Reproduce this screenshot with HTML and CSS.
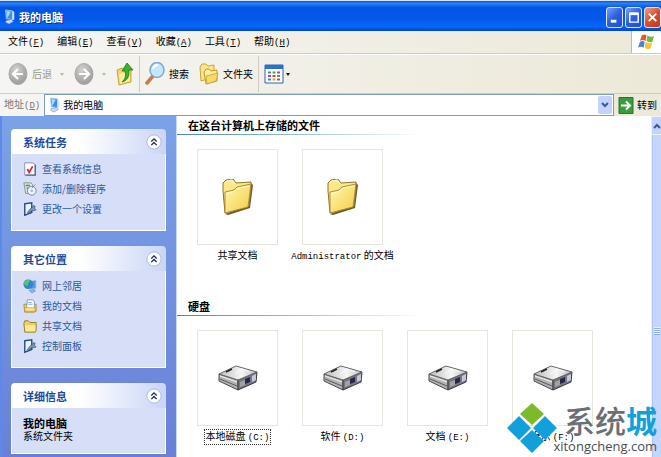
FILE: index.html
```html
<!DOCTYPE html>
<html lang="zh-CN">
  <head>
    <meta charset="utf-8" />
    <meta name="viewport" content="width=device-width, initial-scale=1" />
    <title>我的电脑</title>
    <link rel="stylesheet" href="styles.css">
  </head>
  <body>
    <!-- shared icons -->
    <svg class="sprite" aria-hidden="true">
      <defs>
        <linearGradient id="folder-fill" x1="0" y1="0" x2="1" y2="1">
          <stop offset="0" stop-color="#fff9b0" />
          <stop offset="1" stop-color="#f5cb45" />
        </linearGradient>
        <linearGradient id="disk-top" x1="0" y1="0" x2="1" y2="0">
          <stop offset="0" stop-color="#bdbdbd" />
          <stop offset=".6" stop-color="#f6f6f6" />
          <stop offset="1" stop-color="#b9b9bd" />
        </linearGradient>
        <radialGradient id="nav-fill" cx=".4" cy=".3" r=".7">
          <stop offset="0" stop-color="#d2d2d0" />
          <stop offset="1" stop-color="#9c9c9a" />
        </radialGradient>
      </defs>
      <symbol id="computer" viewBox="0 0 16 16">
        <path d="M4 0l8 1v10l-7-1z" fill="#3f8fe0" stroke="#a9cdf2" />
        <path d="M5 1l5 1-4 7z" fill="#a8d8fb" />
        <path d="M12 1l2 1v9l-2 0z" fill="#d7e3f2" />
        <path d="M5 12l6-1 2 2-5 3-4-2z" fill="#c9dcf2" stroke="#5e86bd" stroke-width=".6" />
      </symbol>
      <symbol id="folder" viewBox="0 0 32 36">
        <path d="M3 35L6 36 28 29 31 6 29 4 26 27z" fill="#6b5a26" />
        <path d="M1 12L1 4 4 1 11 0 14 4 29 3 29 8 27 27 3 34z" fill="#f9e788" stroke="#8c7626" />
        <path d="M3 13L12 11 15 8 29 5 26 28 3 34z" fill="url(#folder-fill)" stroke="#a08430" stroke-width=".9" />
        <path d="M3 4l2-2 5-1 3 4" fill="none" stroke="#fffbd2" />
        <path d="M4 15l9-3 3-3 11-2" fill="none" stroke="#fffcd8" stroke-width=".8" />
      </symbol>
      <symbol id="disk" viewBox="0 0 40 26">
        <path d="M1 9L20 15 20 25 1 16z" fill="#b2b2b2" stroke="#4a4a4a" />
        <path d="M20 15L39 7 38 17 20 25z" fill="#77777f" stroke="#3a3a46" />
        <path d="M1 9L18 1 39 7 20 15z" fill="url(#disk-top)" stroke="#666" />
        <path d="M2 11l17 6" stroke="#f2f2f2" fill="none" />
        <path d="M2 14l17 7" stroke="#5a5a5a" fill="none" />
        <path d="M22 17l5-2v5l-5 2z" fill="#a2a2a6" />
        <path d="M27 14l5-2v5l-5 2z" fill="#26264c" />
        <path d="M34 11l4-2v6l-4 2z" fill="#c5c5e0" />
        <path d="M8 7l6-3" stroke="#222" stroke-width="1.6" />
        <path d="M17 9l7-5 8 3" fill="none" stroke="#fff" stroke-width=".8" />
      </symbol>
      <symbol id="chevrons" viewBox="0 0 18 18">
        <circle cx="9" cy="9" r="8" fill="#fff" stroke="#a8b4d8" />
        <path d="M6 8.500l3-3 3 3M6 12.500l3-3 3 3" fill="none" stroke="#1b2c55" stroke-width="1.500" />
      </symbol>
      <symbol id="settings" viewBox="0 0 16 16">
        <path d="M2 2l8-1v11l-8 3z" fill="#e9f2fc" stroke="#294f7d" stroke-width="1.600" />
        <path d="M5 12l4-5 2-1 1-2 2 1-1 2 2 2-3 1-2 0-4 3z" fill="#7c97ba" stroke="#2a4569" stroke-width=".7" />
      </symbol>
    </svg>

    <div class="window">
      <header class="titlebar">
        <svg class="icon"><use href="#computer" /></svg>
        <h1 class="titlebar__text">我的电脑</h1>
        <div class="titlebar__buttons">
          <button class="winbtn" aria-label="最小化">
            <svg viewBox="0 0 16 18"><path d="M4 13h6" stroke="#fff" stroke-width="3" /></svg>
          </button>
          <button class="winbtn" aria-label="最大化">
            <svg viewBox="0 0 16 18"><path d="M4 5h9v9H4z" fill="none" stroke="#fff" stroke-width="1.500" /><path d="M3.500 5h10" stroke="#fff" stroke-width="3" /></svg>
          </button>
          <button class="winbtn winbtn--close" aria-label="关闭">
            <svg viewBox="0 0 16 18"><path d="M4 5l8 8M12 5l-8 8" stroke="#fff" stroke-width="2" /></svg>
          </button>
        </div>
      </header>

      <nav class="menubar">
        <button class="menubar__item">文件<span class="latin">(<u>F</u>)</span></button>
        <button class="menubar__item">编辑<span class="latin">(<u>E</u>)</span></button>
        <button class="menubar__item">查看<span class="latin">(<u>V</u>)</span></button>
        <button class="menubar__item">收藏<span class="latin">(<u>A</u>)</span></button>
        <button class="menubar__item">工具<span class="latin">(<u>T</u>)</span></button>
        <button class="menubar__item">帮助<span class="latin">(<u>H</u>)</span></button>
        <span class="menubar__logo">
          <svg viewBox="0 0 18 18">
            <path d="M4 2q3-2 5 0L8 8q-3-2-6 0z" fill="#e4572b" />
            <path d="M10 2q3 2 7 1l-2 6q-3 1-6-1z" fill="#74b843" />
            <path d="M2 9q3-2 5 0l-1 6q-3-2-6 0z" fill="#4a82d8" />
            <path d="M8 9q3 2 7 1l-2 6q-3 1-6-1z" fill="#f5c234" />
          </svg>
        </span>
      </nav>

      <div class="toolbar">
        <button class="tool tool--off">
          <svg class="tool__nav" viewBox="0 0 20 22"><ellipse cx="10" cy="11" rx="9" ry="10.500" fill="url(#nav-fill)" stroke="#aaa9a3" /><path d="M15 11H6M10 6l-5 5 5 5" fill="none" stroke="#fff" stroke-width="2.200" /></svg>
          后退
          <span class="caret"></span>
        </button>
        <button class="tool tool--off" aria-label="前进">
          <svg class="tool__nav" viewBox="0 0 20 22"><ellipse cx="10" cy="11" rx="9" ry="10.500" fill="url(#nav-fill)" stroke="#aaa9a3" /><path d="M5 11h9M10 6l5 5-5 5" fill="none" stroke="#fff" stroke-width="2.200" /></svg>
          <span class="caret"></span>
        </button>
        <button class="tool" aria-label="向上">
          <svg class="tool__up" viewBox="0 0 18 24">
            <path d="M1 8l5-2 2 2 7-1v13l-12 3z" fill="#f3d566" stroke="#b5942c" stroke-width=".8" />
            <path d="M3 12l11-3v10L4 22z" fill="#fbeb9c" />
            <path d="M6 20q5-4 3-11H6l5-8 6 7h-4q1 10-7 12z" fill="#3db02f" stroke="#1f7a1c" stroke-width=".8" />
          </svg>
        </button>
        <span class="toolbar__line"></span>
        <button class="tool">
          <svg class="tool__search" viewBox="0 0 20 24">
            <path d="M8 14l-6 7" stroke="#c47a50" stroke-width="3.500" stroke-linecap="round" />
            <ellipse cx="12" cy="8" rx="7" ry="7.500" fill="#c5e6fb" stroke="#7fa6d2" stroke-width="1.500" />
            <path d="M8 7q1-4 5-4" stroke="#fff" stroke-width="2" fill="none" />
          </svg>
          搜索
        </button>
        <button class="tool">
          <svg class="tool__folders" viewBox="0 0 20 22">
            <path d="M1 4l2-3h4l2 2 6-1v12L2 18z" fill="#fae68a" stroke="#c9a53a" />
            <path d="M5 9l2-3h3l2 2 6-1v11L7 21z" fill="#fdeea0" stroke="#c09a30" />
            <path d="M7 13l12-3-2 8-9 3z" fill="#f8d968" stroke="#c09a30" stroke-width=".7" />
          </svg>
          文件夹
        </button>
        <span class="toolbar__line"></span>
        <button class="tool tool--views" aria-label="查看方式">
          <svg class="tool__views" viewBox="0 0 20 20">
            <path d="M1 1h18v18H1z" fill="#fff" stroke="#2a63b8" />
            <path d="M1 1h18v4H1z" fill="#2f6fd0" />
            <path d="M4 8.500h3M4 15.500h3" stroke="#5b7fae" stroke-width="2" />
            <path d="M8.500 8.500h3M13 12h3" stroke="#55976b" stroke-width="2" />
            <path d="M13 8.500h3M4 12h3" stroke="#7a5fae" stroke-width="2" />
            <path d="M8.500 12h3M13 15.500h3" stroke="#c3532e" stroke-width="2" />
            <path d="M8.500 15.500h3" stroke="#d7a42c" stroke-width="2" />
          </svg>
          <span class="caret"></span>
        </button>
      </div>

      <div class="address">
        <label class="address__label" for="address">地址<span class="latin">(<u>D</u>)</span></label>
        <div class="address__field">
          <svg class="icon"><use href="#computer" /></svg>
          <input class="address__input" id="address" type="text" value="我的电脑">
          <button class="address__drop" aria-label="展开">
            <svg viewBox="0 0 8 6"><path d="M1 1l3 3 3-3" fill="none" stroke="#3c5b96" stroke-width="2" /></svg>
          </button>
        </div>
        <button class="address__go">
          <svg viewBox="0 0 16 18"><path d="M1 1h14v16H1z" fill="#3a9c3c" stroke="#23772a" /><path d="M3 9h9M8 5l4 4-4 4" fill="none" stroke="#fff" stroke-width="2" /></svg>
          转到
        </button>
      </div>

      <div class="content">
        <aside class="sidebar">
          <section class="pane">
            <header class="pane__head">
              <h2 class="pane__title">系统任务</h2>
              <button class="pane__toggle" aria-label="折叠"><svg><use href="#chevrons" /></svg></button>
            </header>
            <div class="pane__body">
              <a class="pane__link" href="#">
                <svg class="icon" viewBox="0 0 16 16"><path d="M2 1h9l3 2v12H2z" fill="#fff" stroke="#7d8aa8" /><path d="M14 3v12H3" fill="none" stroke="#56658c" stroke-width="1.500" /><path d="M5 8l2 4 4-7" fill="none" stroke="#d3253c" stroke-width="2" /></svg>
                查看系统信息
              </a>
              <a class="pane__link" href="#">
                <svg class="icon" viewBox="0 0 16 16"><path d="M1 1h8l2 2v10H3z" fill="#dfe7e0" stroke="#7c8f88" /><path d="M3 4h5M4 7h3" stroke="#4f9457" stroke-width="1.500" /><circle cx="10" cy="10" r="5" fill="#eef1fb" stroke="#6f7fa8" /><circle cx="10" cy="10" r="1.500" fill="#a9b4d8" /><path d="M10 7l4-4" stroke="#a86892" /></svg>
                添加/删除程序
              </a>
              <a class="pane__link" href="#"><svg class="icon"><use href="#settings" /></svg>更改一个设置</a>
            </div>
          </section>

          <section class="pane">
            <header class="pane__head">
              <h2 class="pane__title">其它位置</h2>
              <button class="pane__toggle" aria-label="折叠"><svg><use href="#chevrons" /></svg></button>
            </header>
            <div class="pane__body">
              <a class="pane__link" href="#">
                <svg class="icon" viewBox="0 0 16 16"><path d="M8 2l7-1v10l-7 1z" fill="#4c9be6" stroke="#c3d6ee" /><circle cx="6" cy="6" r="5.500" fill="#2f86c8" /><path d="M1 4q4-5 7-2l-2 3-1 3q-4-1-4-4z" fill="#63c069" /><path d="M7 13l6-1 1 2-4 2z" fill="#9db5d8" stroke="#5b779f" stroke-width=".6" /></svg>
                网上邻居
              </a>
              <a class="pane__link" href="#">
                <svg class="icon" viewBox="0 0 16 16"><path d="M1 6h14v8l-2 1H2z" fill="#f2d46c" stroke="#a98a2c" /><path d="M5 1h6l2 2v8H4z" fill="#fff" stroke="#7f93b4" /><path d="M6 4h4M6 6h5" stroke="#7fa3d0" /><path d="M2 10h12v4H2z" fill="#fae48a" stroke="#a98a2c" stroke-width=".6" /></svg>
                我的文档
              </a>
              <a class="pane__link" href="#">
                <svg class="icon" viewBox="0 0 16 16"><path d="M1 5l1-3h4l2 2h7v9l-1 2H2z" fill="#f0cf5c" stroke="#8e752c" /><path d="M2 7h12v7H3z" fill="#fdeb94" /></svg>
                共享文档
              </a>
              <a class="pane__link" href="#"><svg class="icon"><use href="#settings" /></svg>控制面板</a>
            </div>
          </section>

          <section class="pane">
            <header class="pane__head">
              <h2 class="pane__title">详细信息</h2>
              <button class="pane__toggle" aria-label="折叠"><svg><use href="#chevrons" /></svg></button>
            </header>
            <div class="pane__body pane__body--details">
              <strong>我的电脑</strong>
              <p>系统文件夹</p>
            </div>
          </section>
        </aside>

        <main class="files">
          <section class="group">
            <h2 class="group__title">在这台计算机上存储的文件</h2>
            <div class="group__grid">
              <a class="tile" href="#">
                <span class="tile__box"><svg class="tile__folder"><use href="#folder" /></svg></span>
                <span class="tile__name">共享文档</span>
              </a>
              <a class="tile" href="#">
                <span class="tile__box"><svg class="tile__folder"><use href="#folder" /></svg></span>
                <span class="tile__name"><span class="latin">Administrator</span> 的文档</span>
              </a>
            </div>
          </section>

          <section class="group">
            <h2 class="group__title">硬盘</h2>
            <div class="group__grid">
              <a class="tile" href="#">
                <span class="tile__box"><svg class="tile__disk"><use href="#disk" /></svg></span>
                <span class="tile__name tile__name--focus">本地磁盘 <span class="latin">(C:)</span></span>
              </a>
              <a class="tile" href="#">
                <span class="tile__box"><svg class="tile__disk"><use href="#disk" /></svg></span>
                <span class="tile__name">软件 <span class="latin">(D:)</span></span>
              </a>
              <a class="tile" href="#">
                <span class="tile__box"><svg class="tile__disk"><use href="#disk" /></svg></span>
                <span class="tile__name">文档 <span class="latin">(E:)</span></span>
              </a>
              <a class="tile" href="#">
                <span class="tile__box"><svg class="tile__disk"><use href="#disk" /></svg></span>
                <span class="tile__name">娱乐 <span class="latin">(F:)</span></span>
              </a>
            </div>
          </section>
        </main>

        <div class="scrollbar">
          <button class="scrollbar__up" aria-label="向上滚动">
            <svg viewBox="0 0 8 6"><path d="M1 5l3-3 3 3" fill="none" stroke="#3c5b96" stroke-width="2" /></svg>
          </button>
          <div class="scrollbar__thumb"><span class="scrollbar__grip"></span></div>
        </div>
      </div>

      <div class="brand">
        <svg class="brand__logo" viewBox="0 0 50 50">
          <path d="M25 0l12 11-12 11-12-11z" fill="#7cba2c" />
          <path d="M12 13l12 12-12 12L0 25zM38 13l12 12-12 12-12-12zM25 27l12 11-12 12-12-12z" fill="#12a0dc" />
        </svg>
        <div class="brand__text">
          <span class="brand__name">系统<b>城</b></span>
          <span class="brand__url">xitongcheng.com</span>
        </div>
      </div>
    </div>
  </body>
</html>
```
FILE: styles.css
```css
* {
	box-sizing: border-box;
}

body {
	margin: 0;
	font: 10px/12px "Noto Sans CJK SC", sans-serif;
	color: #000;
	background: #fff;
}

h1, h2, p {
	margin: 0;
}

button {
	padding: 0;
	border: 0;
	background: none;
	font: inherit;
	color: inherit;
}

a {
	color: inherit;
	text-decoration: none;
}

svg {
	display: block;
	flex: none;
}

.sprite {
	position: absolute;
	width: 0;
	height: 0;
}

.icon {
	width: 14px;
	height: 16px;
}

.latin {
	font-family: "Liberation Mono", monospace;
	font-size: 9px;
}

.window {
	position: relative;
	display: flex;
	flex-direction: column;
	height: 100vh;
	overflow: hidden;
}

/* title bar */
.titlebar {
	display: flex;
	align-items: center;
	gap: 3px;
	height: 31px;
	padding: 2px 0 0 2px;
	border-top: 1px solid #d5e4f4;
	background: linear-gradient(#0a55d0, #2a80f8 8%, #0355e4 22%, #0458e8 60%, #0767fb 85%, #0243c4);
}
.titlebar__text {
	flex: 1;
	font-size: 11px;
	color: #fff;
	text-shadow: 1px 1px #0a2f8a;
}
.titlebar__buttons {
	display: flex;
	gap: 2px;
}
.winbtn {
	width: 17px;
	height: 21px;
	border: 1px solid #dbe6fb;
	border-radius: 3px;
	background: linear-gradient(135deg, #7b9ff0, #2b5fe0 50%, #1f4fd0);
}
.winbtn--close {
	background: linear-gradient(135deg, #f0a088, #dc4c28 50%, #c53a18);
}

/* menu */
.menubar {
	display: flex;
	height: 23px;
	padding-left: 8px;
	border-bottom: 1px solid #d0cdbd;
	background: linear-gradient(90deg, #f5f5f3, #ece9d8);
}
.menubar__item {
	margin-right: 13px;
	white-space: nowrap;
}
.menubar__logo {
	display: flex;
	align-items: center;
	justify-content: center;
	width: 30px;
	margin-left: auto;
	border-left: 1px solid #bdbaa8;
	background: #fff;
}
.menubar__logo svg {
	width: 17px;
	height: 18px;
}

/* toolbar */
.toolbar {
	display: flex;
	align-items: center;
	gap: 10px;
	height: 40px;
	padding-left: 8px;
	border-top: 1px solid #fff;
	border-bottom: 1px solid #d0cdbd;
	background: linear-gradient(90deg, #f5f5f3, #ece9d8);
}
.toolbar__line {
	width: 1px;
	height: 36px;
	margin: 0 -5px;
	background: #cfccbc;
}
.tool {
	display: flex;
	align-items: center;
	gap: 4px;
	white-space: nowrap;
}
.tool--off {
	color: #9b998c;
}
.tool--off .caret {
	margin-left: 4px;
	color: #bbb9ae;
}
.tool--views {
	gap: 2px;
}
.tool__nav {
	width: 20px;
	height: 24px;
}
.tool__up {
	width: 18px;
	height: 24px;
}
.tool__search,
.tool__folders {
	width: 20px;
	height: 24px;
}
.tool__views {
	width: 20px;
	height: 20px;
}
.caret {
	border: 2px solid transparent;
	border-top: 3px solid;
	border-bottom: 0;
}

/* address bar */
.address {
	display: flex;
	align-items: center;
	gap: 4px;
	height: 22px;
	padding: 0 4px;
	background: linear-gradient(90deg, #f5f5f3, #ece9d8);
}
.address__label {
	color: #77756a;
	white-space: nowrap;
}
.address__field {
	display: flex;
	flex: 1;
	align-items: center;
	min-width: 0;
	height: 22px;
	padding-left: 2px;
	border: 1px solid #7f9db9;
	background: #fff;
}
.address__input {
	flex: 1;
	min-width: 0;
	padding: 0 2px;
	border: 0;
	outline: 0;
	background: none;
	font: inherit;
}
.address__drop {
	display: flex;
	align-items: center;
	justify-content: center;
	width: 14px;
	height: 18px;
	margin-right: 1px;
	border-radius: 2px;
	background: #c3d3fb;
}
.address__drop svg,
.scrollbar__up svg {
	width: 8px;
	height: 6px;
}
.address__go {
	display: flex;
	align-items: center;
	gap: 3px;
	white-space: nowrap;
}
.address__go svg {
	width: 16px;
	height: 19px;
}

/* sidebar */
.content {
	display: flex;
	flex: 1;
	min-height: 0;
}
.sidebar {
	display: flex;
	flex: none;
	flex-direction: column;
	gap: 15px;
	width: 177px;
	padding: 13px 10px 0 9px;
	border-left: 2px solid #5b8ae8;
	border-right: 1px solid #c9dafa;
	background: linear-gradient(#7ba2e7, #6a80d8);
}
.pane {
	flex: none;
}
.pane__head {
	display: flex;
	align-items: center;
	justify-content: space-between;
	height: 25px;
	padding: 0 4px 0 12px;
	border-radius: 4px 4px 0 0;
	background: linear-gradient(90deg, #fff 45%, #c9d5f7);
}
.pane__title {
	font-size: 11px;
	color: #1c4a9c;
}
.pane__toggle svg {
	width: 16px;
	height: 18px;
}
.pane__body {
	padding: 5px 11px 11px;
	border: 1px solid #fff;
	border-top: 0;
	background: #d6dff7;
}
.pane__link {
	display: flex;
	align-items: center;
	gap: 5px;
	height: 20px;
	color: #2a5a9e;
	white-space: nowrap;
}
.pane__body--details {
	padding: 9px 11px 11px;
}
.pane__body--details strong {
	font-size: 11px;
}

/* file list */
.files {
	flex: 1;
	min-width: 0;
	overflow: hidden;
	background: #fff;
}
.group {
	margin-bottom: 33px;
}
.group__title {
	padding: 3px 11px;
	font-size: 11px;
	line-height: 12px;
	border-bottom: 1px solid;
	border-image: linear-gradient(90deg, #4f86b8, #9cc3dc 130px, transparent 245px) 1;
}
.group__grid {
	display: flex;
	flex-wrap: wrap;
	padding: 14px 0 0 8px;
}
.tile {
	display: flex;
	flex-direction: column;
	align-items: center;
	width: 105px;
}
.tile__box {
	display: flex;
	align-items: center;
	justify-content: center;
	width: 81px;
	height: 96px;
	border: 1px solid #e6e6da;
}
.tile__folder {
	width: 32px;
	height: 36px;
}
.tile__disk {
	width: 40px;
	height: 26px;
}
.tile__name {
	margin-top: 3px;
	padding: 0 1px;
	border: 1px solid transparent;
	white-space: nowrap;
}
.tile__name--focus {
	border: 1px dotted #333;
}

/* scrollbar */
.scrollbar {
	display: flex;
	flex: none;
	flex-direction: column;
	width: 10px;
	padding: 1px 0 0 1px;
	background: #eef1fb;
}
.scrollbar__up {
	display: flex;
	align-items: center;
	justify-content: center;
	height: 17px;
	background: #c3d3fb;
}
.scrollbar__thumb {
	display: flex;
	flex: 1;
	align-items: center;
	justify-content: center;
	margin-top: 1px;
	padding-top: 70px;
	border-left: 1px solid #b0c4f4;
	background: #c5d5fc;
}
.scrollbar__grip {
	width: 6px;
	height: 8px;
	background: repeating-linear-gradient(#eef4fe 0 1px, #8cb0f8 1px 2px);
}

/* site mark in the corner */
.brand {
	position: absolute;
	right: 4px;
	bottom: 2px;
	display: flex;
	align-items: flex-start;
}
.brand__logo {
	width: 50px;
	height: 52px;
}
.brand__text {
	display: flex;
	flex-direction: column;
	align-items: flex-end;
	margin: 1px 0 0 -4px;
}
.brand__name {
	font-size: 31px;
	line-height: 34px;
	font-weight: 500;
	color: #6b6f73;
}
.brand__name b {
	color: #12a0dc;
}
.brand__url {
	font: 13px/18px "Open Sans", sans-serif;
	color: #4a4d50;
}
```
